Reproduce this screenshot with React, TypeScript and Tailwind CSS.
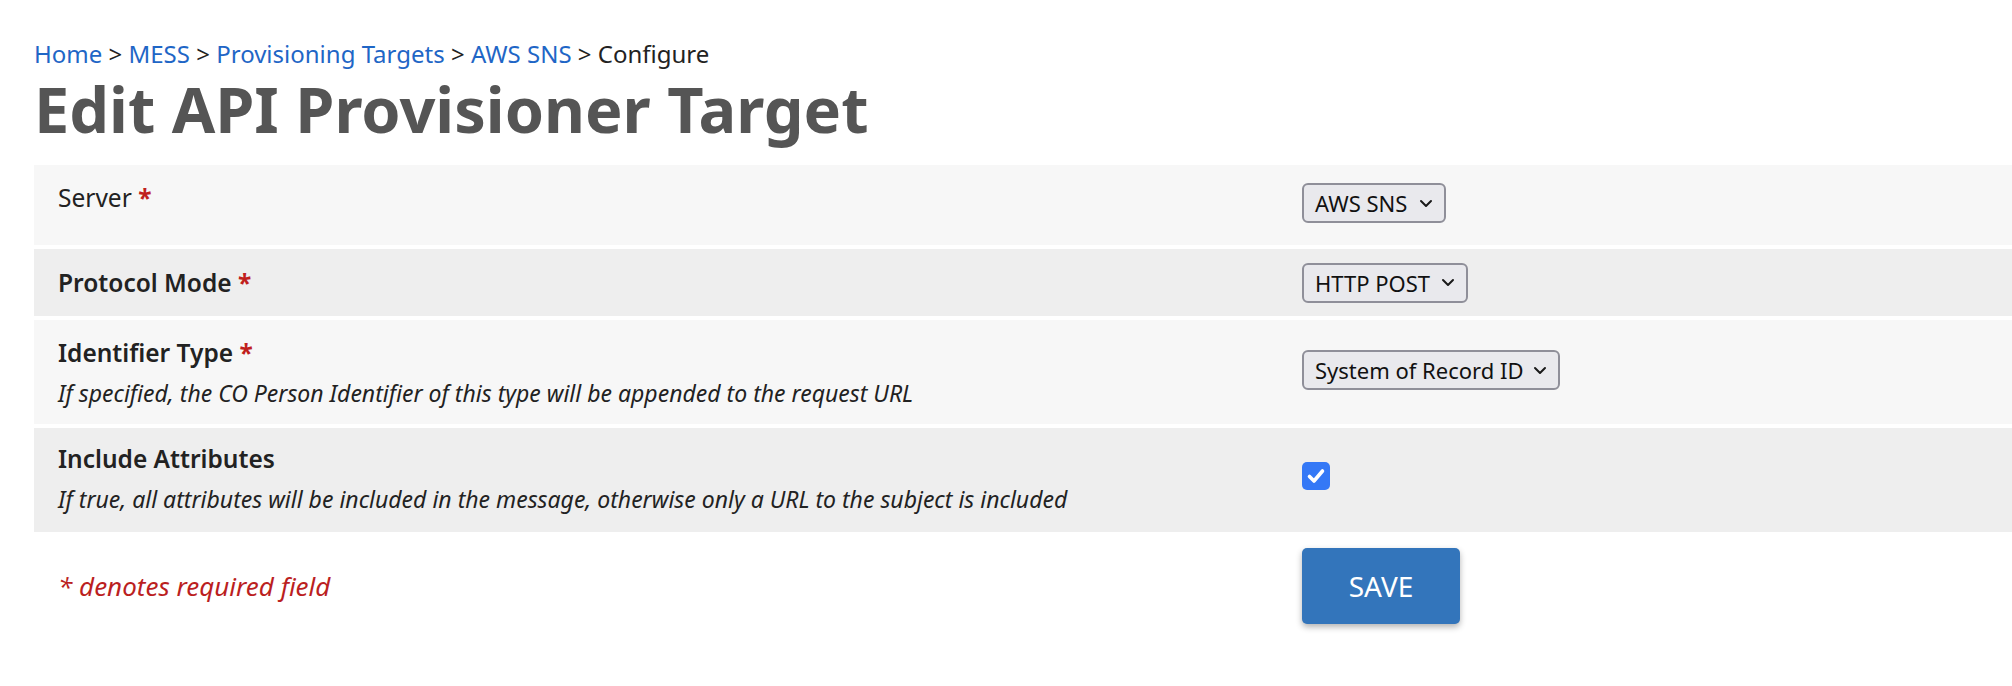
import React from "react";

function Chevron() {
  return (
    <svg width="14" height="9" viewBox="0 0 14 9" fill="none">
      <path d="M2 2 L7 7 L12 2" stroke="#1a1a1a" strokeWidth="2" strokeLinecap="round" strokeLinejoin="round" />
    </svg>
  );
}

function FakeSelect({ value, w }: { value: string; w: string }) {
  return (
    <div
      className={`${w} h-[40px] flex items-center justify-between pl-[11px] pr-[11px] rounded-[6px] border-2 border-[#8f8f99] bg-[#e9e9ed] text-[22px] leading-none text-[#111]`}
    >
      <span>{value}</span>
      <Chevron />
    </div>
  );
}

function Req() {
  return <span className="text-[#c0201c] font-bold"> *</span>;
}

export default function App() {
  return (
    <div
      className="w-[2012px] h-[686px] bg-white pl-[34px] pt-[36px] overflow-hidden"
      style={{ fontFamily: '"Noto Sans", "Open Sans", sans-serif' }}
    >
      <nav className="text-[24px] leading-[36px] text-[#222] whitespace-nowrap">
        <a className="text-[#1f66c6]">Home</a> &gt; <a className="text-[#1f66c6]">MESS</a> &gt;{" "}
        <a className="text-[#1f66c6]">Provisioning Targets</a> &gt; <a className="text-[#1f66c6]">AWS SNS</a> &gt; Configure
      </nav>
      <h1 className="text-[63px] leading-[74px] font-bold text-[#555555] whitespace-nowrap">
        Edit API Provisioner Target
      </h1>

      <div className="mt-[19px] flex flex-col gap-[4px]">
        {/* Row 1 */}
        <div className="flex h-[80px] bg-[#f7f7f7]">
          <div className="w-[1248px] pl-[24px] pt-[15px] text-[24.5px] leading-[36px] text-[#222]">
            Server
            <Req />
          </div>
          <div className="flex-1 pl-[20px] flex items-center pb-[4px]">
            <FakeSelect value="AWS SNS" w="w-[144px]" />
          </div>
        </div>
        {/* Row 2 */}
        <div className="flex h-[67px] bg-[#eeeeee]">
          <div className="w-[1248px] pl-[24px] pt-[16px] text-[24.5px] leading-[36px] font-semibold text-[#222]">
            Protocol Mode
            <Req />
          </div>
          <div className="flex-1 pl-[20px] flex items-center">
            <FakeSelect value="HTTP POST" w="w-[166px]" />
          </div>
        </div>
        {/* Row 3 */}
        <div className="flex h-[104px] bg-[#f7f7f7]">
          <div className="w-[1248px] pl-[24px] pt-[15px] text-[#222]">
            <div className="text-[24.5px] leading-[36px] font-semibold">
              Identifier Type
              <Req />
            </div>
            <div className="mt-[6px] text-[23px] leading-[32px] italic whitespace-nowrap">
              If specified, the CO Person Identifier of this type will be appended to the request URL
            </div>
          </div>
          <div className="flex-1 pl-[20px] flex items-center pb-[4px]">
            <FakeSelect value="System of Record ID" w="w-[258px]" />
          </div>
        </div>
        {/* Row 4 */}
        <div className="flex h-[104px] bg-[#eeeeee]">
          <div className="w-[1248px] pl-[24px] pt-[13px] text-[#222]">
            <div className="text-[24.5px] leading-[36px] font-semibold">Include Attributes</div>
            <div className="mt-[6px] text-[23px] leading-[32px] italic whitespace-nowrap">
              If true, all attributes will be included in the message, otherwise only a URL to the subject is included
            </div>
          </div>
          <div className="flex-1 pl-[20px] flex items-center pb-[8px]">
            <div className="w-[28px] h-[28px] rounded-[5px] bg-[#3478f6] flex items-center justify-center">
              <svg width="22" height="22" viewBox="0 0 22 22" fill="none">
                <path d="M4.5 11.5 L9 16 L17.5 6" stroke="white" strokeWidth="3.6" strokeLinecap="round" strokeLinejoin="round" />
              </svg>
            </div>
          </div>
        </div>
      </div>

      {/* Footer */}
      <div className="flex pt-[16px]">
        <div className="w-[1248px] pl-[24px] flex items-center">
          <span className="text-[26px] leading-[36px] italic text-[#bb1f1f]">* denotes required field</span>
        </div>
        <div className="flex-1 pl-[20px]">
          <button className="w-[158px] h-[76px] rounded-[5px] bg-[#3375bb] text-white text-[28px] shadow-[0_3px_6px_rgba(0,0,0,0.3)]">
            SAVE
          </button>
        </div>
      </div>
    </div>
  );
}
